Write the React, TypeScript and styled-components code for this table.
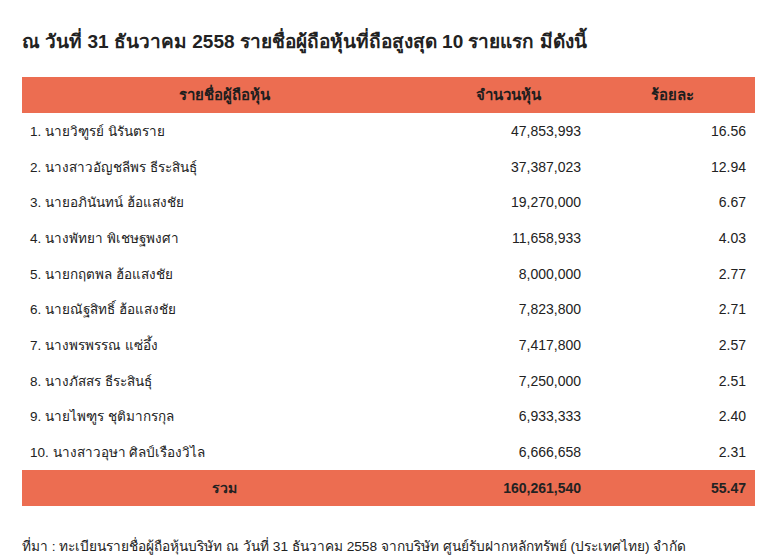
import styled, { createGlobalStyle } from "styled-components";

const GlobalStyle = createGlobalStyle`
  body {
    margin: 0;
    background: #ffffff;
    font-family: "Liberation Sans", Arial, "DejaVu Sans", sans-serif;
    color: #222222;
  }
`;

interface Holder {
  name: string;
  shares: string;
  percent: string;
}

const holders: Holder[] = [
  { name: "1. นายวิฑูรย์ นิรันตราย", shares: "47,853,993", percent: "16.56" },
  { name: "2. นางสาวอัญชลีพร ธีระสินธุ์", shares: "37,387,023", percent: "12.94" },
  { name: "3. นายอภินันทน์ ฮ้อแสงชัย", shares: "19,270,000", percent: "6.67" },
  { name: "4. นางพัทยา พิเชษฐพงศา", shares: "11,658,933", percent: "4.03" },
  { name: "5. นายกฤตพล ฮ้อแสงชัย", shares: "8,000,000", percent: "2.77" },
  { name: "6. นายณัฐสิทธิ์ ฮ้อแสงชัย", shares: "7,823,800", percent: "2.71" },
  { name: "7. นางพรพรรณ แซ่อึ้ง", shares: "7,417,800", percent: "2.57" },
  { name: "8. นางภัสสร ธีระสินธุ์", shares: "7,250,000", percent: "2.51" },
  { name: "9. นายไพฑูร ชุติมากรกุล", shares: "6,933,333", percent: "2.40" },
  { name: "10. นางสาวอุษา ศิลป์เรืองวิไล", shares: "6,666,658", percent: "2.31" },
];

const Page = styled.div`
  width: 775px;
  height: 560px;
  padding: 30px 20px 0 22px;
  box-sizing: border-box;
  overflow: hidden;
`;

const Title = styled.h1`
  margin: 0 0 23px;
  font-size: 19px;
  font-weight: bold;
  line-height: 24px;
`;

const Table = styled.table`
  width: 733px;
  border-collapse: collapse;
  font-size: 14px;
`;

const Col = styled.col<{ $w: number }>`
  width: ${(p) => p.$w}px;
`;

const HeadRow = styled.tr`
  background: #ec6d51;
  height: 36px;
`;

const HeadCell = styled.th`
  font-size: 15px;
  font-weight: bold;
  text-align: center;
  padding: 0;
  color: #1e1e1e;
`;

const Row = styled.tr`
  height: 35.7px;
`;

const Cell = styled.td<{ $num?: boolean }>`
  padding: 0 ${(p) => (p.$num ? "9px" : "8px")};
  text-align: ${(p) => (p.$num ? "right" : "left")};
  font-size: ${(p) => (p.$num ? "14px" : "13.5px")};
  white-space: nowrap;
`;

const TotalRow = styled.tr`
  background: #ec6d51;
  height: 36px;
  font-weight: bold;
`;

const TotalLabel = styled.td`
  text-align: center;
  padding: 0;
`;

const Source = styled.p`
  margin: 31px 0 0;
  font-size: 13.7px;
  line-height: 20px;
`;

export default function App(): JSX.Element {
  return (
    <>
      <GlobalStyle />
      <Page>
        <Title>ณ วันที่ 31 ธันวาคม 2558 รายชื่อผู้ถือหุ้นที่ถือสูงสุด 10 รายแรก มีดังนี้</Title>
        <Table>
          <colgroup>
            <Col $w={404} />
            <Col $w={164} />
            <Col $w={165} />
          </colgroup>
          <thead>
            <HeadRow>
              <HeadCell>รายชื่อผู้ถือหุ้น</HeadCell>
              <HeadCell>จำนวนหุ้น</HeadCell>
              <HeadCell>ร้อยละ</HeadCell>
            </HeadRow>
          </thead>
          <tbody>
            {holders.map((h) => (
              <Row key={h.name}>
                <Cell>{h.name}</Cell>
                <Cell $num>{h.shares}</Cell>
                <Cell $num>{h.percent}</Cell>
              </Row>
            ))}
            <TotalRow>
              <TotalLabel>รวม</TotalLabel>
              <Cell $num>160,261,540</Cell>
              <Cell $num>55.47</Cell>
            </TotalRow>
          </tbody>
        </Table>
        <Source>
          ที่มา : ทะเบียนรายชื่อผู้ถือหุ้นบริษัท ณ วันที่ 31 ธันวาคม 2558 จากบริษัท ศูนย์รับฝากหลักทรัพย์ (ประเทศไทย) จำกัด
        </Source>
      </Page>
    </>
  );
}
